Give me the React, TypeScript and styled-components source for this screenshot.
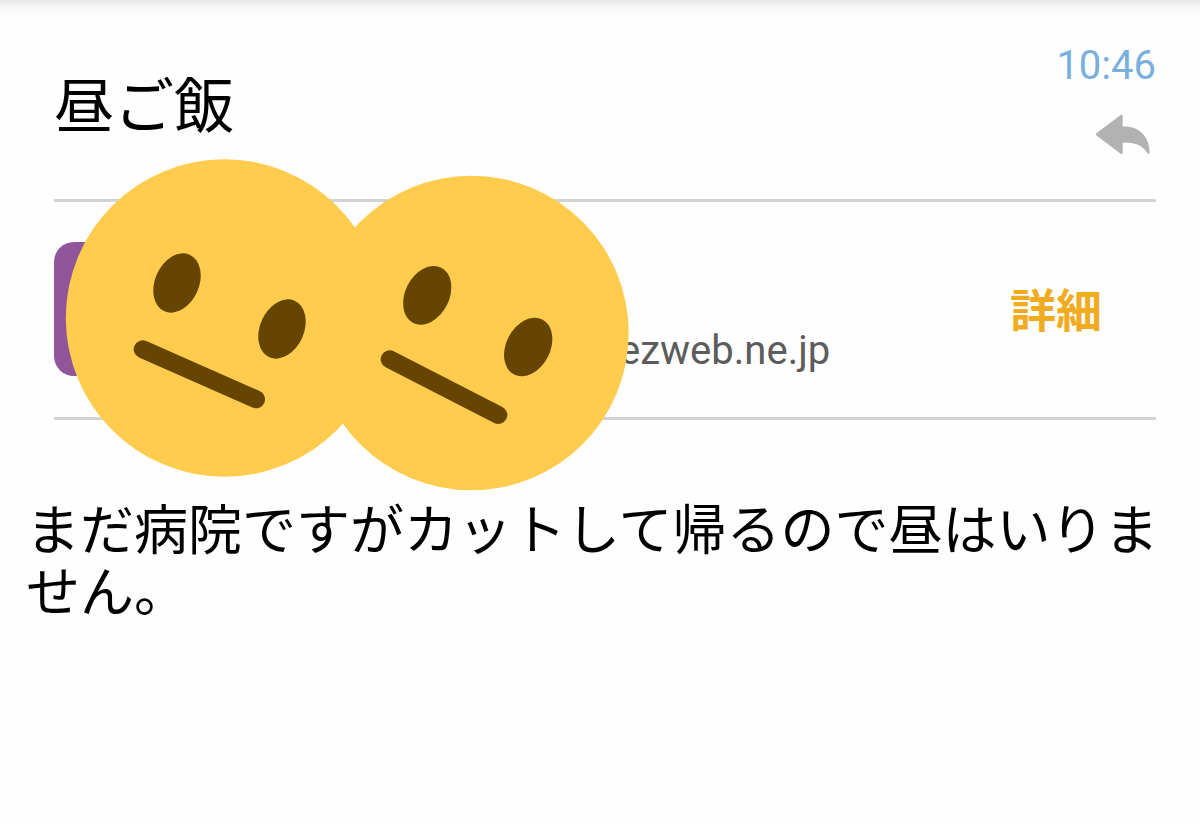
import React from "react";
import styled, { createGlobalStyle } from "styled-components";

const GlobalStyle = createGlobalStyle`
  * { box-sizing: border-box; }
  body {
    margin: 0;
    background: #fefefe;
    color: #000;
    font-family: Roboto, "Noto Sans CJK JP", sans-serif;
  }
`;

const Page = styled.main`
  min-height: 100vh;
  background: linear-gradient(#e6e6e6, #f6f6f6 7px, #fefefe 16px);
`;

const Header = styled.header`
  display: flex;
  justify-content: space-between;
  margin: 0 44px 0 54px;
  padding-top: 44px;
  height: 202px;
  border-bottom: 3px solid #d3d3d3;
`;

const Subject = styled.h1`
  margin: 0;
  padding-top: 20px;
  font-size: 60px;
  line-height: 88px;
  font-weight: 400;
`;

const Meta = styled.div`
  display: flex;
  flex-direction: column;
  align-items: flex-end;
  gap: 22px;
`;

const Time = styled.time`
  font-size: 40px;
  line-height: 44px;
  color: #78afdc;
`;

const PlainButton = styled.button`
  border: 0;
  padding: 0;
  background: none;
  font-family: inherit;
  cursor: pointer;
`;

const ReplyButton = styled(PlainButton)`
  margin-right: 5px;
  svg { display: block; }
`;

const SenderRow = styled.section`
  position: relative;
  display: flex;
  align-items: center;
  margin: 0 44px 0 54px;
  padding-bottom: 2px;
  height: 218px;
  border-bottom: 3px solid #d3d3d3;
`;

const Avatar = styled.div`
  flex: none;
  width: 134px;
  height: 134px;
  border-radius: 20px;
  background: #91559b;
`;

const Address = styled.span`
  flex: 1;
  padding: 84px 0 0 431px;
  font-size: 40px;
  line-height: 48px;
  color: #5c5c5c;
`;

const DetailButton = styled(PlainButton)`
  margin-right: 54px;
  padding-top: 4px;
  font-size: 46px;
  line-height: 56px;
  font-weight: 700;
  color: #f0ac1e;
`;

const Stickers = styled.svg`
  position: absolute;
  left: 0;
  top: -52px;
  pointer-events: none;
`;

const Body = styled.p`
  margin: 0;
  padding: 81px 36px 0 26px;
  font-size: 54px;
  line-height: 62px;
`;

type FaceProps = {
  cx: number;
  cy: number;
  r: number;
  tilt: number;
  eyes: [number, number][];
  mouth: string;
};

function Face({ cx, cy, r, tilt, eyes, mouth }: FaceProps) {
  return (
    <g>
      <circle cx={cx} cy={cy} r={r} fill="#ffcc4d" />
      {eyes.map(([x, y]) => (
        <ellipse key={x} cx={x} cy={y} rx="22" ry="31" fill="#664500" transform={`rotate(${tilt} ${x} ${y})`} />
      ))}
      <path d={mouth} stroke="#664500" strokeWidth="18" strokeLinecap="round" />
    </g>
  );
}

export default function App() {
  return (
    <>
      <GlobalStyle />
      <Page>
        <Header>
          <Subject>昼ご飯</Subject>
          <Meta>
            <Time>10:46</Time>
            <ReplyButton type="button" aria-label="返信">
              <svg width="56" height="48" viewBox="1095 110 56 48" fill="#b2b2b2">
                <path d="M1096.4 133.2L1121 114.8Q1122.7 114 1122.7 116V126.5C1138 125.5 1149.5 136 1149.6 152Q1149.6 154 1148.4 154Q1147.6 154 1147 152.6C1142 144.5 1134 142.4 1122.7 142.8V152.6Q1122.7 155 1121 154L1096.4 135.4Q1095.4 134.3 1096.4 133.2Z" />
              </svg>
            </ReplyButton>
          </Meta>
        </Header>
        <SenderRow>
          <Avatar />
          <Address>ezweb.ne.jp</Address>
          <DetailButton type="button">詳細</DetailButton>
          <Stickers width="590" height="350" viewBox="54 150 590 350" fill="none" aria-hidden="true">
            <Face cx={224.5} cy={318} r={158.7} tilt={24} eyes={[[177, 283], [282, 329]]} mouth="M142.7 349.3L256 399.3" />
            <Face cx={471.4} cy={333} r={157.3} tilt={27} eyes={[[427.2, 295.3], [528.2, 347]]} mouth="M389.7 359.3L498.3 415" />
          </Stickers>
        </SenderRow>
        <Body>まだ病院ですがカットして帰るので昼はいりません。</Body>
      </Page>
    </>
  );
}
